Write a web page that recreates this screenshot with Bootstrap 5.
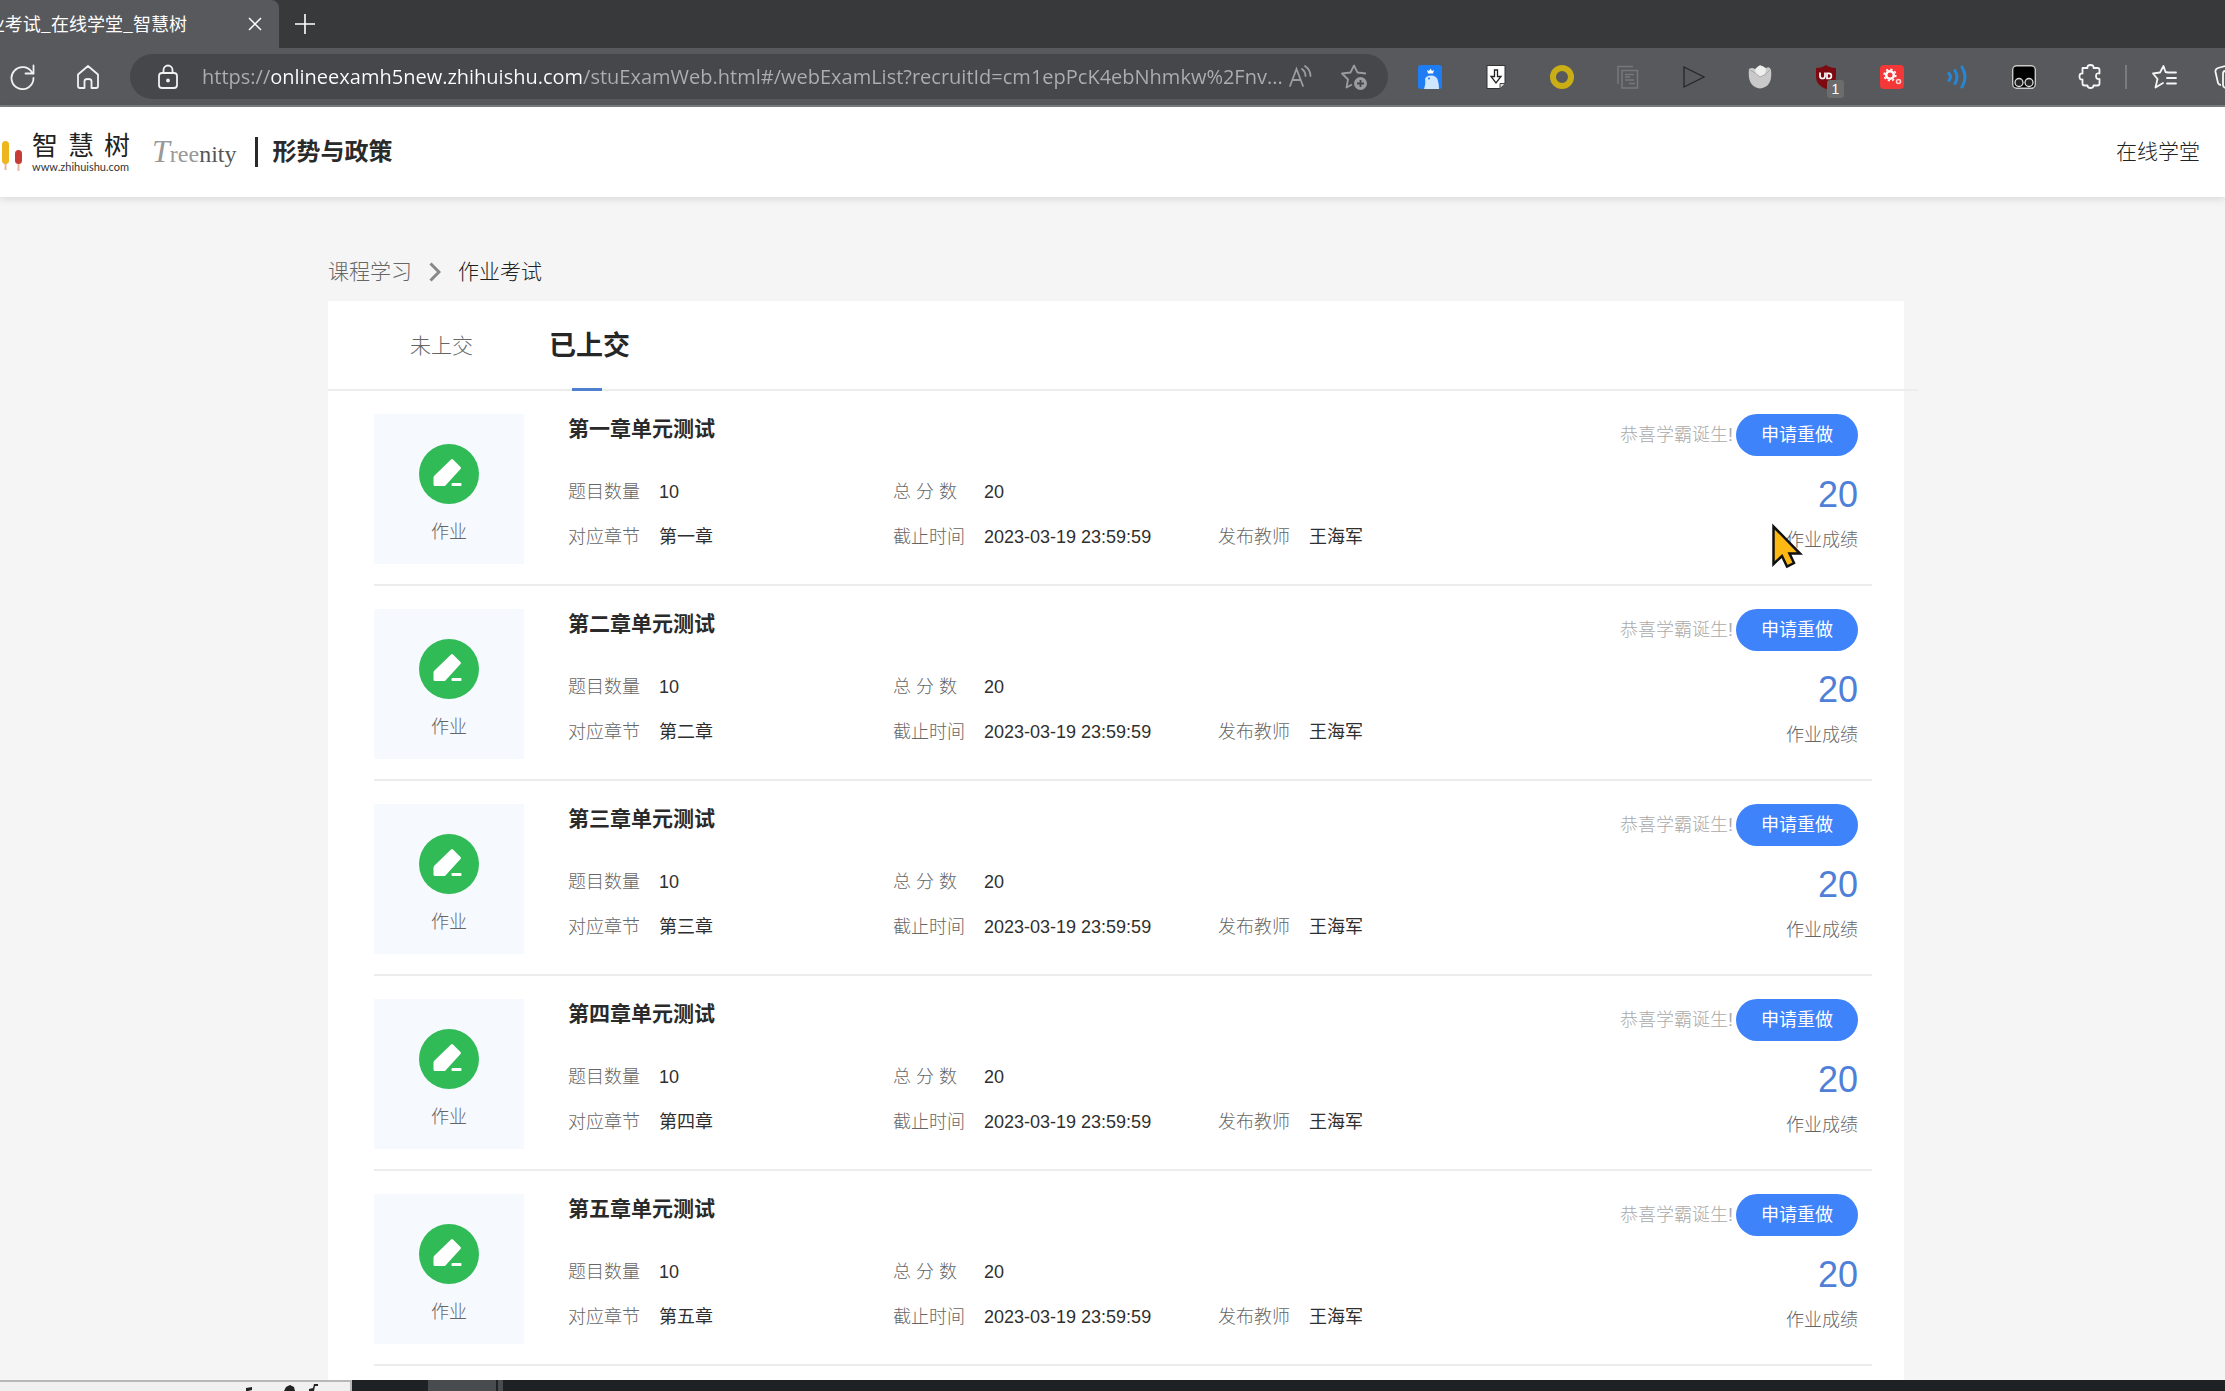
<!DOCTYPE html>
<html lang="zh-CN">
<head>
<meta charset="utf-8">
<meta name="viewport" content="width=device-width, initial-scale=1">
<title>作业考试_在线学堂_智慧树</title>
<link href="https://cdn.jsdelivr.net/npm/bootstrap@5.3.0/dist/css/bootstrap.min.css" rel="stylesheet">
<style>
  body { font-family: "Liberation Sans", "Noto Sans CJK SC", sans-serif; font-size: 18px; line-height: 30px; color: #2a2a2a; background: #f5f5f5; }
  button { font-family: inherit; }
  svg { display: block; flex: none; }
  .plain-btn { border: 0; padding: 0; background: none; color: inherit; }

  /* browser chrome */
  .tab-strip { height: 48px; background: #38393b; color: #fff; }
  .tab-open { width: 279px; height: 48px; background: #58595d; border-top-right-radius: 8px; padding-right: 15px; }
  .tab-name { width: 187px; font-size: 18px; line-height: 28px; padding-bottom: 2px; font-family: "Noto Sans CJK SC", sans-serif; }
  .tool-strip { height: 59px; background: #58595d; border-bottom: 2px solid #7c7d81; color: #f1f1f1; padding-left: 10px; }
  .home-btn { margin-left: 41px; }
  .url-pill { height: 45px; border-radius: 23px; background: #46474b; margin-left: 30px; margin-right: 30px; padding: 0 20px 0 26px; }
  .url-box { border: 0; outline: 0; padding: 0; height: 36px; margin-left: 22px; font-family: "Open Sans", sans-serif; font-size: 20px; color: #adaeb2;
    background: linear-gradient(90deg, #adaeb2 0 69px, #ffffff 69px 380px, #adaeb2 380px); -webkit-background-clip: text; background-clip: text; -webkit-text-fill-color: transparent; }
  .fav-btn { margin-left: 27px; }
  .ext-row { gap: 42px; }
  .tool-sep { width: 2px; height: 24px; background: #7a7b7f; margin: 0 24px 0 23px; }
  .tool-cut { margin-left: 35px; }
  .block-badge { left: 13px; top: 15px; width: 17px; height: 18px; border-radius: 3px; background: #6b6d6d; color: #fff; font-size: 14px; line-height: 18px; text-align: center; }

  /* site header */
  .site-head { height: 90px; background: #fff; box-shadow: 0 2px 8px rgba(0,0,0,.12); z-index: 1; padding-right: 25px; }
  .brand-cn { font-size: 26px; line-height: 30px; gap: 10px; color: #222; }
  .brand-url { font-family: Lato, sans-serif; font-size: 11px; line-height: 12px; color: #333; }
  .brand-en { font-family: "Liberation Serif", serif; font-size: 24px; color: #555; margin-left: 22px; }
  .brand-en em { font-size: 32px; color: #999; }
  .brand-en span { color: #999; }
  .course-name { font-size: 24px; font-weight: 700; margin: 0 0 0 14px; line-height: 30px; }
  .head-bar { width: 3px; height: 30px; background: #2a2a2a; margin-left: 19px; }
  .head-link { font-size: 21px; color: #222; font-weight: 300; }

  /* content */
  .page-wrap { max-width: 1583px; padding-left: 7px; }
  .crumbs { font-size: 21px; font-weight: 300; padding: 60px 0 14px; gap: 17px; color: #222; }
  .crumbs a { color: #666; }
  .panel-box { background: #fff; }
  .tab-bar { height: 90px; border-bottom: 2px solid #ececec; margin-right: -14px; padding-left: 82px; gap: 76px; }
  .tab-btn { font-size: 21px; font-weight: 300; color: #666; padding-top: 2px; }
  .tab-btn.is-on { font-size: 27px; font-weight: 700; color: #262626; }
  .tab-btn.is-on::after { content: ""; position: absolute; bottom: -2px; left: 23px; width: 30px; height: 3px; background: #4f80cf; }
  .work-list { padding: 0 32px 0 46px; }
  .work-item { height: 195px; padding: 23px 14px 20px 0; border-bottom: 2px solid #ececec; }
  .thumb { width: 150px; height: 150px; background: #f6f9fe; padding-top: 30px; gap: 13px; color: #666; font-weight: 300; }
  .work-info { margin-left: 44px; }
  .work-info h2 { font-size: 21px; line-height: 30px; font-weight: 700; margin: 0 0 26px; }
  .meta { line-height: 45px; }
  .meta > div { width: 325px; }
  .meta dt { width: 91px; font-weight: 300; color: #666; }
  .meta dd { margin: 0; color: #2f2f2f; white-space: nowrap; }
  .cheer { color: #aaa; font-weight: 300; margin-right: 3px; }
  .redo { width: 122px; height: 42px; border-radius: 21px; background: #3f83fb; color: #fff; border: 0; padding: 0; font-size: 18px; }
  .points { font-size: 36px; line-height: 40px; margin-top: 19px; color: #4f80d8; }
  .points-label { margin-top: 10px; color: #666; font-weight: 300; }
  .pointer { left: -15px; top: -2px; }

  /* strip under the window */
  .task-strip { height: 11px; background: #1e2225; z-index: 2; }
  .task-left { width: 352px; background: #f0f0f0; border-top: 2px solid #b8b8b8; border-right: 2px solid #b8b8b8; }
  .task-on { width: 68px; margin-left: 76px; background: #484c4f; }
  .task-edge { width: 5px; margin-left: 2px; background: #484c4f; }
</style>
<script src="https://cdn.jsdelivr.net/npm/bootstrap@5.3.0/dist/js/bootstrap.bundle.min.js"></script>
</head>
<body class="vh-100 d-flex flex-column overflow-hidden">

<svg width="0" height="0" class="position-absolute" aria-hidden="true">
  <symbol id="pen" viewBox="0 0 60 60">
    <circle cx="30" cy="30" r="30" fill="#30bb57"/>
    <path d="M15 32 32 15.500Q33 14.500 34 15.500L41.500 23Q42.500 24 41.500 25L26 42H16Q14.500 42 14.500 40.500V33.500Z" fill="#fff"/>
    <rect x="32.500" y="39" width="10" height="3" rx="1" fill="#fff"/>
  </symbol>
</svg>

<div class="tab-strip d-flex align-items-center flex-shrink-0">
  <div class="tab-open d-flex align-items-center justify-content-between">
    <div class="tab-name d-flex justify-content-end overflow-hidden text-nowrap">业考试_在线学堂_智慧树</div>
    <button class="plain-btn" aria-label="关闭标签页"><svg width="18" height="18" viewBox="0 0 18 18" stroke="#fff" stroke-width="1.500"><path d="M3 3l12 12M15 3L3 15"/></svg></button>
  </div>
  <button class="plain-btn ms-3" aria-label="新建标签页"><svg width="20" height="20" viewBox="0 0 20 20" stroke="#fff" stroke-width="1.600"><path d="M10 0v20M0 10h20"/></svg></button>
</div>

<div class="tool-strip d-flex align-items-center flex-shrink-0">
  <button class="plain-btn" aria-label="刷新"><svg width="25" height="26" viewBox="0 0 25 26" fill="none" stroke="#f1f1f1" stroke-width="1.800"><path d="M22.500 9.500A11 11 0 1 0 23.500 14M23.500 1.500V9.500H15.500" stroke-linecap="round"/></svg></button>
  <button class="plain-btn home-btn" aria-label="主页"><svg width="24" height="26" viewBox="0 0 24 26" fill="none" stroke="#f1f1f1" stroke-width="1.800" stroke-linejoin="round"><path d="M2 10.500 12 2 22 10.500V22Q22 24 20 24H15.500V17Q15.500 15 12 15T8.500 17V24H4Q2 24 2 22Z"/></svg></button>
  <div class="url-pill d-flex align-items-center flex-fill">
    <svg width="24" height="26" viewBox="0 0 24 26" fill="none" stroke="#f1f1f1" stroke-width="1.800"><rect x="3" y="9" width="18" height="15" rx="3"/><path d="M7.500 9V6a4.500 4.500 0 0 1 9 0V9"/><circle cx="12" cy="16.500" r="1" fill="#f1f1f1"/></svg>
    <input class="url-box flex-fill" type="text" aria-label="地址" value="https://onlineexamh5new.zhihuishu.com/stuExamWeb.html#/webExamList?recruitId=cm1epPcK4ebNhmkw%2Fnv...">
    <button class="plain-btn" aria-label="大声朗读"><svg width="26" height="26" viewBox="0 0 26 26" fill="none" stroke="#9b9ca0" stroke-width="1.800" stroke-linecap="round"><path d="M3 22 9.500 5 16 22M5.500 16H13.500M15 5Q18.500 7.500 18.500 12M18 2Q23.500 6 23.500 12"/></svg></button>
    <button class="plain-btn fav-btn" aria-label="收藏"><svg width="28" height="28" viewBox="0 0 28 28" fill="none" stroke="#9b9ca0" stroke-width="1.800" stroke-linejoin="round"><path d="M26 10.500 17.500 9.500 14 2.500 10.500 9.500 2 10.500 8 16.500 6.500 24.500 12 21.500"/><circle cx="20.500" cy="20.500" r="6.500" fill="#9b9ca0" stroke="none"/><path d="M20.500 17v7M17 20.500h7" stroke="#46474b"/></svg></button>
  </div>
  <div class="ext-row d-flex align-items-center">
    <svg width="24" height="24" viewBox="0 0 24 24"><rect width="24" height="24" rx="3" fill="#1f7df4"/><path d="M6 24Q8 18 7 14 8 10.500 13 10.500 19 10.500 20 16 21 20 21 24Z" fill="#cfe6ff"/><path d="M9 5l2 1 1.500-2.500L14 6l2-1-1 3.500h-5Z" fill="#fff"/><circle cx="11" cy="13.500" r="1" fill="#1f7df4"/></svg>
    <svg width="24" height="24" viewBox="0 0 24 24"><path d="M3 .5H21V18L16 23.500H3Z" fill="#fff" stroke="#333"/><path d="M16 23V18.500H21" fill="#ddd" stroke="#444"/><path d="M10.500 5h3v6.500h3.500l-5 6.500-5-6.500h3.500Z" fill="#fff" stroke="#222" stroke-width="1.300"/></svg>
    <svg width="24" height="24" viewBox="0 0 24 24"><circle cx="12" cy="12" r="9" fill="none" stroke="#c9ae16" stroke-width="6"/></svg>
    <svg width="24" height="24" viewBox="0 0 24 24" fill="none" stroke="#77787b" stroke-width="1.500"><path d="M2 19V1.500H17M6 5.500H21.500V23H6ZM9 9.500h9M9 12h5M9 15h9M13 18.500h6"/></svg>
    <svg width="24" height="24" viewBox="0 0 24 24" fill="none" stroke="#26272a" stroke-width="1.300"><path d="M2 2 22 12 2 22Z"/></svg>
    <svg width="24" height="25" viewBox="0 0 24 25"><path d="M1 5Q4 3 7 5L12 1 18 4Q22 2 23 6 25 23 12 24.500 -1 23 1 5Z" fill="#c9c9ca"/><path d="M7 6Q12-2 18 5 18 12 12 12.500 7 11 7 6Z" fill="#eee"/><path d="M2 6Q8 9 12 13 17 12 22 6" fill="none" stroke="#a9a9aa"/></svg>
    <div class="position-relative">
      <svg width="24" height="24" viewBox="0 0 24 24"><path d="M12 0Q16 3 22 3V12Q22 20 12 24 2 20 2 12V3Q8 3 12 0Z" fill="#7c0a10"/><path d="M6 7.500V11a2.500 2.500 0 0 0 5 0V7.500M13 8.300h1.800a2.600 2.600 0 0 1 0 5.200H13Z" fill="none" stroke="#fff" stroke-width="1.700"/></svg>
      <span class="block-badge position-absolute">1</span>
    </div>
    <svg width="24" height="24" viewBox="0 0 24 24"><rect width="24" height="24" rx="4" fill="#f43838"/><circle cx="10" cy="10" r="3.800" fill="none" stroke="#fff" stroke-width="2.600"/><circle cx="10" cy="10" r="5.800" fill="none" stroke="#fff" stroke-width="1.600" stroke-dasharray="2.200 2.300"/><circle cx="18.500" cy="16.500" r="2" fill="none" stroke="#ffd5d5" stroke-width="1.500"/></svg>
    <svg width="24" height="24" viewBox="0 0 24 24" fill="none" stroke="#2388d8" stroke-width="3" stroke-linecap="round"><path d="M3 8.500Q6 12 3 15.500M9 5.500Q13 12 9 18.500M16 2Q22 12 16 22"/></svg>
    <svg width="24" height="24" viewBox="0 0 24 24"><rect x=".7" y=".7" width="22.600" height="22.600" rx="4" fill="#000" stroke="#c9c9c9" stroke-width="1.400"/><g fill="#222" stroke="#ddd" stroke-width="1.300"><circle cx="7" cy="17.500" r="4"/><circle cx="17" cy="17.500" r="4"/></g></svg>
    <svg width="24" height="25" viewBox="0 0 24 25" fill="none" stroke="#f5f5f5" stroke-width="1.800" stroke-linejoin="round"><path d="M4.500 4H9.500Q9 1 12.500 1T15.500 4H19.500Q21.500 4 21.500 6V9.500Q18 8.500 18 12T21.500 15V19.500Q21.500 21.500 19.500 21.500H15.500Q15.500 24 12.500 24T9.500 21.500H6.500Q4.500 21.500 4.500 19.500V15.500Q1.500 16 1.500 12.500T4.500 9.500Z"/></svg>
  </div>
  <div class="tool-sep flex-shrink-0"></div>
  <svg width="26" height="26" viewBox="0 0 26 26" fill="none" stroke="#f5f5f5" stroke-width="1.800" stroke-linejoin="round" stroke-linecap="round"><path d="M17 8.500 14.500 8 12.500 2 9 8.500 2 9.500 6.500 15 4.500 23.500 12 19M17 8.500H25M16 14H25M16 19.500H25"/></svg>
  <svg class="tool-cut" width="13" height="26" viewBox="0 0 13 26" fill="none" stroke="#f5f5f5" stroke-width="1.800"><path d="M13 2 6 4Q3 5 3.500 8L6 19Q7 21 9 21M13 7Q11 7 11 10V21Q11 23 13 24"/></svg>
</div>

<header class="site-head d-flex align-items-center flex-shrink-0 position-relative">
  <svg width="32" height="42" viewBox="0 0 32 42"><path d="M5.500 31v8M18.500 33v7" stroke="#e7b9a0" stroke-width="2"/><rect x="2" y="10" width="7" height="23" rx="3.500" fill="#efb51d"/><rect x="15" y="19" width="7" height="14" rx="3.500" fill="#c63d38"/></svg>
  <div class="d-flex flex-column">
    <div class="brand-cn d-flex"><span>智</span><span>慧</span><span>树</span></div>
    <div class="brand-url">www.zhihuishu.com</div>
  </div>
  <div class="brand-en"><em>T</em><span>ree</span>nity</div>
  <div class="head-bar"></div>
  <h1 class="course-name">形势与政策</h1>
  <a class="head-link ms-auto text-decoration-none" href="#">在线学堂</a>
</header>

<main class="flex-fill overflow-hidden">
  <div class="page-wrap mx-auto h-100 d-flex flex-column">
    <nav class="crumbs d-flex align-items-center" aria-label="面包屑">
      <a class="text-decoration-none" href="#">课程学习</a>
      <svg width="12" height="20" viewBox="0 0 12 20" fill="none" stroke="#888" stroke-width="3"><path d="M1.500 1.500 10 10 1.500 18.500"/></svg>
      <span>作业考试</span>
    </nav>
    <section class="panel-box flex-fill">
      <div class="tab-bar d-flex align-items-stretch" role="tablist">
        <button class="tab-btn plain-btn position-relative" role="tab" aria-selected="false">未上交</button>
        <button class="tab-btn is-on plain-btn position-relative" role="tab" aria-selected="true">已上交</button>
      </div>
      <div class="work-list">

        <article class="work-item d-flex">
          <div class="thumb d-flex flex-column align-items-center"><svg width="60" height="60"><use href="#pen"/></svg><span>作业</span></div>
          <div class="work-info flex-fill">
            <h2>第一章单元测试</h2>
            <dl class="meta d-flex mb-0"><div class="d-flex"><dt>题目数量</dt><dd>10</dd></div><div class="d-flex"><dt>总 分 数</dt><dd>20</dd></div></dl>
            <dl class="meta d-flex mb-0"><div class="d-flex"><dt>对应章节</dt><dd>第一章</dd></div><div class="d-flex"><dt>截止时间</dt><dd>2023-03-19 23:59:59</dd></div><div class="d-flex"><dt>发布教师</dt><dd>王海军</dd></div></dl>
          </div>
          <div class="d-flex flex-column align-items-end">
            <div class="d-flex align-items-center"><span class="cheer">恭喜学霸诞生!</span><button class="redo">申请重做</button></div>
            <div class="points">20</div>
            <div class="points-label position-relative">作业成绩
              <svg class="pointer position-absolute" width="32" height="46" viewBox="0 0 32 46"><path d="M2.500 3.500V41L11 33 16 43.500 23 40 18.500 30.500H29Z" fill="#fdb813" stroke="#111" stroke-width="2.500"/></svg>
            </div>
          </div>
        </article>

        <article class="work-item d-flex">
          <div class="thumb d-flex flex-column align-items-center"><svg width="60" height="60"><use href="#pen"/></svg><span>作业</span></div>
          <div class="work-info flex-fill">
            <h2>第二章单元测试</h2>
            <dl class="meta d-flex mb-0"><div class="d-flex"><dt>题目数量</dt><dd>10</dd></div><div class="d-flex"><dt>总 分 数</dt><dd>20</dd></div></dl>
            <dl class="meta d-flex mb-0"><div class="d-flex"><dt>对应章节</dt><dd>第二章</dd></div><div class="d-flex"><dt>截止时间</dt><dd>2023-03-19 23:59:59</dd></div><div class="d-flex"><dt>发布教师</dt><dd>王海军</dd></div></dl>
          </div>
          <div class="d-flex flex-column align-items-end">
            <div class="d-flex align-items-center"><span class="cheer">恭喜学霸诞生!</span><button class="redo">申请重做</button></div>
            <div class="points">20</div>
            <div class="points-label">作业成绩</div>
          </div>
        </article>

        <article class="work-item d-flex">
          <div class="thumb d-flex flex-column align-items-center"><svg width="60" height="60"><use href="#pen"/></svg><span>作业</span></div>
          <div class="work-info flex-fill">
            <h2>第三章单元测试</h2>
            <dl class="meta d-flex mb-0"><div class="d-flex"><dt>题目数量</dt><dd>10</dd></div><div class="d-flex"><dt>总 分 数</dt><dd>20</dd></div></dl>
            <dl class="meta d-flex mb-0"><div class="d-flex"><dt>对应章节</dt><dd>第三章</dd></div><div class="d-flex"><dt>截止时间</dt><dd>2023-03-19 23:59:59</dd></div><div class="d-flex"><dt>发布教师</dt><dd>王海军</dd></div></dl>
          </div>
          <div class="d-flex flex-column align-items-end">
            <div class="d-flex align-items-center"><span class="cheer">恭喜学霸诞生!</span><button class="redo">申请重做</button></div>
            <div class="points">20</div>
            <div class="points-label">作业成绩</div>
          </div>
        </article>

        <article class="work-item d-flex">
          <div class="thumb d-flex flex-column align-items-center"><svg width="60" height="60"><use href="#pen"/></svg><span>作业</span></div>
          <div class="work-info flex-fill">
            <h2>第四章单元测试</h2>
            <dl class="meta d-flex mb-0"><div class="d-flex"><dt>题目数量</dt><dd>10</dd></div><div class="d-flex"><dt>总 分 数</dt><dd>20</dd></div></dl>
            <dl class="meta d-flex mb-0"><div class="d-flex"><dt>对应章节</dt><dd>第四章</dd></div><div class="d-flex"><dt>截止时间</dt><dd>2023-03-19 23:59:59</dd></div><div class="d-flex"><dt>发布教师</dt><dd>王海军</dd></div></dl>
          </div>
          <div class="d-flex flex-column align-items-end">
            <div class="d-flex align-items-center"><span class="cheer">恭喜学霸诞生!</span><button class="redo">申请重做</button></div>
            <div class="points">20</div>
            <div class="points-label">作业成绩</div>
          </div>
        </article>

        <article class="work-item d-flex">
          <div class="thumb d-flex flex-column align-items-center"><svg width="60" height="60"><use href="#pen"/></svg><span>作业</span></div>
          <div class="work-info flex-fill">
            <h2>第五章单元测试</h2>
            <dl class="meta d-flex mb-0"><div class="d-flex"><dt>题目数量</dt><dd>10</dd></div><div class="d-flex"><dt>总 分 数</dt><dd>20</dd></div></dl>
            <dl class="meta d-flex mb-0"><div class="d-flex"><dt>对应章节</dt><dd>第五章</dd></div><div class="d-flex"><dt>截止时间</dt><dd>2023-03-19 23:59:59</dd></div><div class="d-flex"><dt>发布教师</dt><dd>王海军</dd></div></dl>
          </div>
          <div class="d-flex flex-column align-items-end">
            <div class="d-flex align-items-center"><span class="cheer">恭喜学霸诞生!</span><button class="redo">申请重做</button></div>
            <div class="points">20</div>
            <div class="points-label">作业成绩</div>
          </div>
        </article>

      </div>
    </section>
  </div>
</main>

<footer class="task-strip d-flex flex-shrink-0">
  <div class="task-left d-flex justify-content-end"><svg width="110" height="9" viewBox="0 0 110 9" fill="#222"><path d="M6 6 12 5V8L8 9H6ZM44 9 46 5 50 3 54 5 55 9ZM69 9V7L73 6 74 2H78V4H75L74 9Z"/></svg></div>
  <div class="task-on"></div>
  <div class="task-edge"></div>
</footer>
</body>
</html>
